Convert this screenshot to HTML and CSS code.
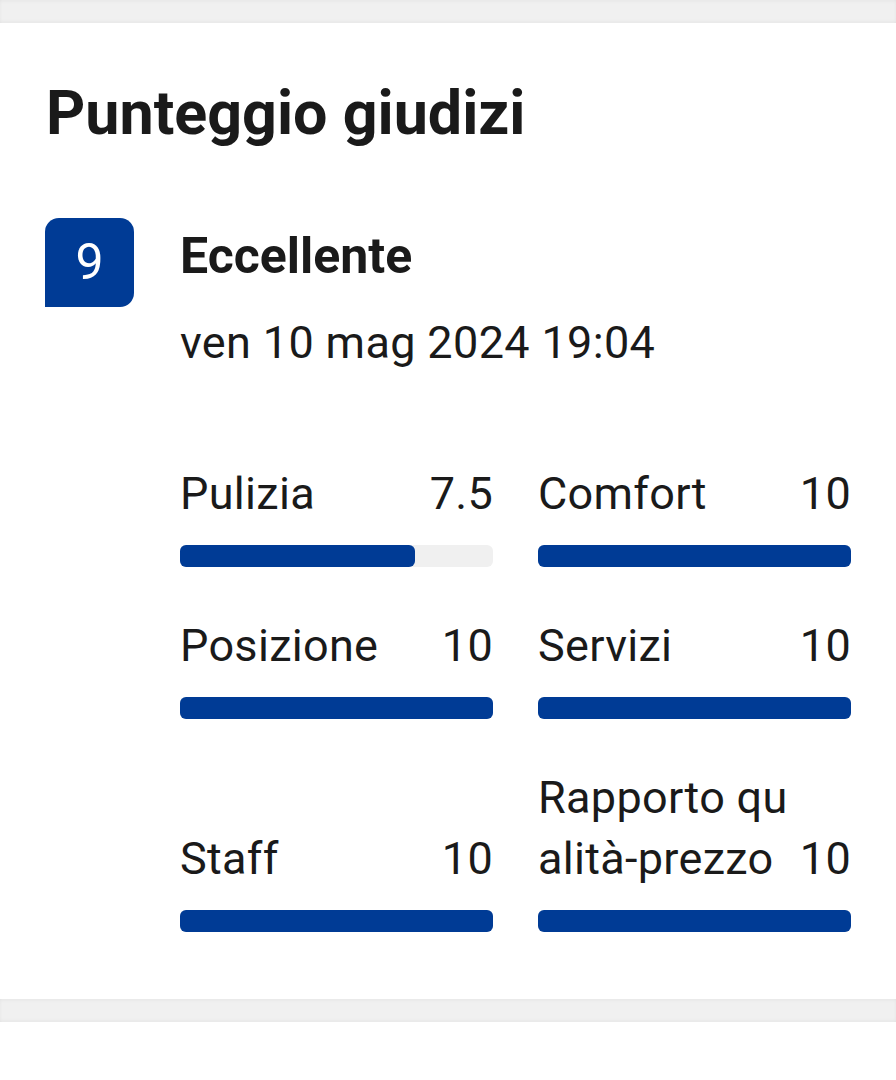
FILE: index.html
```html
<!DOCTYPE html>
<html lang="it">
<head>
    <meta charset="UTF-8">
    <title>Punteggio giudizi</title>
    <link rel="stylesheet" href="styles.css">
</head>
<body>
    <div class="divider"></div>

    <div class="card">
        <h2 class="card-title">Punteggio giudizi</h2>

        <div class="rating">
            <div class="badge">9</div>
            <div class="rating-body">
                <div class="rating-word">Eccellente</div>
                <div class="rating-date">ven 10 mag 2024 19:04</div>

                <div class="scores">
                    <div class="score">
                        <div class="score-head">
                            <span class="score-label">Pulizia</span>
                            <span class="score-value">7.5</span>
                        </div>
                        <div class="bar"><div class="bar-fill" style="width: 75%"></div></div>
                    </div>
                    <div class="score">
                        <div class="score-head">
                            <span class="score-label">Comfort</span>
                            <span class="score-value">10</span>
                        </div>
                        <div class="bar"><div class="bar-fill" style="width: 100%"></div></div>
                    </div>
                    <div class="score">
                        <div class="score-head">
                            <span class="score-label">Posizione</span>
                            <span class="score-value">10</span>
                        </div>
                        <div class="bar"><div class="bar-fill" style="width: 100%"></div></div>
                    </div>
                    <div class="score">
                        <div class="score-head">
                            <span class="score-label">Servizi</span>
                            <span class="score-value">10</span>
                        </div>
                        <div class="bar"><div class="bar-fill" style="width: 100%"></div></div>
                    </div>
                    <div class="score">
                        <div class="score-head">
                            <span class="score-label">Staff</span>
                            <span class="score-value">10</span>
                        </div>
                        <div class="bar"><div class="bar-fill" style="width: 100%"></div></div>
                    </div>
                    <div class="score">
                        <div class="score-head">
                            <span class="score-label">Rapporto qualità-prezzo</span>
                            <span class="score-value">10</span>
                        </div>
                        <div class="bar"><div class="bar-fill" style="width: 100%"></div></div>
                    </div>
                </div>
            </div>
        </div>
    </div>

    <div class="divider"></div>
    <div class="next-card"></div>
</body>
</html>
```

FILE: styles.css
```css
body {
    font-family: Roboto, "Liberation Sans", Arial, sans-serif;
    background-color: #ffffff;
    color: #1a1a1a;
    margin: 0;
    padding: 0;
}
.divider {
    height: 23px;
    background: #f0f0f0;
    box-shadow: inset 0 2px 3px rgba(0, 0, 0, 0.03), inset 0 -2px 3px rgba(0, 0, 0, 0.03);
}
.card {
    background: white;
    padding: 54px 45px 67px 45px;
}
.card-title {
    font-size: 61px;
    line-height: 72px;
    font-weight: 700;
    margin: 0 0 69px 1px;
}
.rating {
    display: flex;
}
.badge {
    flex: none;
    width: 89px;
    height: 89px;
    background: #003b95;
    color: white;
    border-radius: 14px 14px 14px 0;
    font-size: 50px;
    line-height: 89px;
    text-align: center;
}
.rating-body {
    flex: 1;
    margin-left: 46px;
    padding-top: 8px;
}
.rating-word {
    font-size: 50px;
    line-height: 60px;
    font-weight: 700;
}
.rating-date {
    font-size: 45px;
    line-height: 61px;
    letter-spacing: 0.35px;
    margin-top: 26px;
}
.scores {
    display: grid;
    grid-template-columns: 1fr 1fr;
    column-gap: 45px;
    row-gap: 48px;
    margin-top: 90px;
}
.score {
    display: flex;
    flex-direction: column;
    justify-content: flex-end;
}
.score-head {
    display: flex;
    align-items: flex-end;
    justify-content: space-between;
    font-size: 45px;
    line-height: 61px;
    letter-spacing: 0.3px;
    margin-bottom: 21px;
}
.score-label {
    flex: 1;
    min-width: 0;
    word-break: break-all;
}
.score-value {
    flex: none;
    padding-left: 8px;
}
.bar {
    height: 22px;
    background: #f0f0f0;
    border-radius: 6px;
}
.bar-fill {
    height: 100%;
    background: #003b95;
    border-radius: 6px;
}
.next-card {
    height: 60px;
}
```
